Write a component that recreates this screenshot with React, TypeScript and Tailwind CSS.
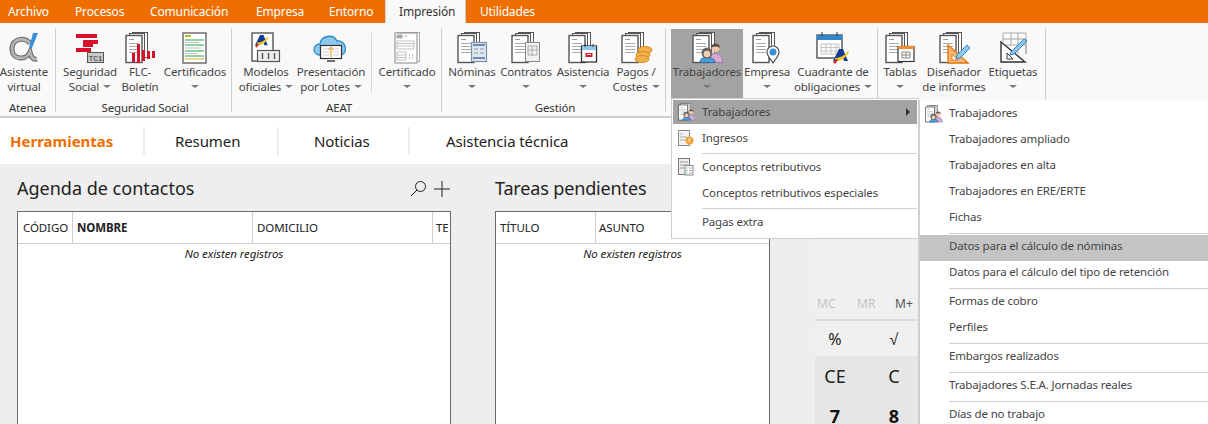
import type { ReactNode } from 'react';

// ─── Icons ────────────────────────────────────────────────────────────
function Stack({ lines = 4 }: { lines?: number }) {
  return (
    <g>
      <rect x="7.500" y="0.500" width="15" height="25" fill="#fff" stroke="#555" />
      <rect x="4.500" y="1.500" width="15" height="26" fill="#fff" stroke="#555" />
      <rect x="1" y="3.500" width="16" height="27" fill="#fff" stroke="#555" strokeWidth="1.400" />
      <path d="M4 7.500h5" stroke="#999" />
      {Array.from({ length: lines }).map((_, i) => (
        <path key={i} d={`M4 ${11.5 + i * 3}h10`} stroke="#aaa" />
      ))}
    </g>
  );
}

function Svg({ children, size = 34 }: { children: ReactNode; size?: number }) {
  return (
    <svg width={size} height={size} viewBox="-2 0 34 34" fill="none" className="shrink-0 overflow-visible">
      {children}
    </svg>
  );
}

function AlphaIcon() {
  return (
    <svg width="30" height="32" viewBox="0 0 30 32" fill="none">
      <path d="M21 12C18 5 3 5 3 17c0 11 14 12 18 3 1 5 3 8 7 7" stroke="#666" strokeWidth="5" />
      <path d="M21 12C18 5 3 5 3 17c0 11 14 12 18 3 1 5 3 8 7 7" stroke="#b4b4b4" strokeWidth="3" />
      <path d="M24 1h5l-6 15h-3z" fill="#3a8fd8" />
    </svg>
  );
}

function SegSocialIcon() {
  return (
    <svg width="30" height="32" viewBox="0 0 30 32" fill="none">
      <path d="M1 2h21v4H1zM8 8h15v4H8zM8 11h10v4H8zM1 16h15v4H1z" fill="#d8102c" />
      <rect x="12.500" y="20.500" width="16" height="10" fill="#c9c9c9" stroke="#555" />
      <text x="20.500" y="29" textAnchor="middle" fontSize="8" fill="#333" fontFamily="'Liberation Mono', monospace">TC1</text>
    </svg>
  );
}

function FlcIcon() {
  return (
    <Svg>
      <Stack />
      <path d="M7 21h3v9H7zM12 12h3v19h-3zM17 18h3v11h-3zM22 19h3v8h-3zM27 19h3v7h-3z" fill="#d8102c" />
    </Svg>
  );
}

function CertGreenIcon() {
  return (
    <svg width="26" height="32" viewBox="0 0 26 32" fill="none">
      <rect x="1" y="1" width="23" height="30" fill="#fff" stroke="#666" strokeWidth="1.400" />
      <path d="M3 3h6v2H3z" fill="#b8b820" />
      <path d="M3 8h19M3 13h19M3 19h19M3 24h19" stroke="#22a04a" />
      <path d="M3 10.500h14M3 16h16M3 21.500h12" stroke="#bbb" />
      <path d="M3 27h19" stroke="#d8b020" />
    </svg>
  );
}

function AeatMark({ x, y, s = 1 }: { x: number; y: number; s?: number }) {
  return (
    <g transform={`translate(${x} ${y}) scale(${s})`}>
      <path d="M6 0h4l5 12h-4l-1-3H5l-2 3H0z" fill="#123a96" />
      <path d="M2 9c5 0 9-2 13-7l1 1c-3 6-8 9-13 9z" fill="#f5c518" />
      <path d="M0 13l4-3 1 1-3 4z" fill="#e02020" />
    </g>
  );
}

function ModelosIcon() {
  return (
    <svg width="30" height="32" viewBox="0 0 30 32" fill="none">
      <rect x="1" y="1" width="21" height="28" fill="#fff" stroke="#555" strokeWidth="1.400" />
      <AeatMark x={4} y={3} s={0.85} />
      <rect x="6.500" y="18.500" width="22" height="11" fill="#eee" stroke="#555" strokeWidth="1.200" />
      <path d="M11.500 21v6M17.500 21v6M23.500 21v6" stroke="#555" strokeWidth="1.400" />
    </svg>
  );
}

function CloudIcon() {
  return (
    <svg width="36" height="32" viewBox="0 0 36 32" fill="none">
      <path d="M7 23c-8 0-8-11 0-11 1-8 13-11 17-3 9-2 12 14 3 14z" fill="#8cc8ee" stroke="#2f86c8" strokeWidth="1.300" />
      <rect x="7.500" y="13.500" width="21" height="13" fill="#fff" stroke="#333" strokeWidth="1.200" />
      <path d="M10 17h6M10 20h6M10 23h6M20 17h6M20 20h6M20 23h6" stroke="#ccc" />
      <path d="M18 25v-9M15.500 18l2.500-3 2.500 3" stroke="#ee8a10" />
      <path d="M14 29h8" stroke="#333" strokeWidth="1.400" />
    </svg>
  );
}

function CertGrayIcon() {
  return (
    <svg width="26" height="32" viewBox="0 0 26 32" fill="none">
      <rect x="3.500" y="0.500" width="22" height="29" fill="#fff" stroke="#aaa" />
      <rect x="1" y="1" width="22" height="30" fill="#fff" stroke="#999" strokeWidth="1.200" />
      <path d="M3 3h5v3H3zM10 4h3" fill="#aaa" stroke="#aaa" />
      <path d="M3 9h17v8H3zM3 11.500h17M3 14h17M3 20h9v8H3zM3 23h9M3 25.500h9" stroke="#c0c0c0" />
      <path d="M15 23h1M18 23h1M15 26h1M18 26h1" stroke="#888" />
    </svg>
  );
}

function NominasIcon() {
  return (
    <Svg>
      <Stack />
      <rect x="14.500" y="10.500" width="15" height="19" fill="#dfe6ee" stroke="#7d93ad" strokeWidth="1.200" />
      <path d="M16 13h12M16 26h12" stroke="#6f8cb0" strokeWidth="2" />
      <path d="M17 17h4M23 17h4M17 21h4M23 21h4" stroke="#99a" />
    </Svg>
  );
}

function ContratosIcon() {
  return (
    <Svg>
      <Stack />
      <rect x="14.500" y="10.500" width="14" height="19" fill="#f1f1f1" stroke="#888" />
      <path d="M17 14h9v9h-9zM17 18h9M21 14v9" stroke="#aaa" />
    </Svg>
  );
}

function AsistenciaIcon() {
  return (
    <Svg>
      <Stack />
      <rect x="13.500" y="14" width="15" height="16" fill="#fff" stroke="#333" strokeWidth="1.300" />
      <path d="M14 14h14v4H14z" fill="#8cc8ee" />
      <path d="M17 12v3M25 12v3" stroke="#333" />
      <path d="M17.500 21h7v4h-7z" fill="#e0102c" />
      <path d="M19 22.500h4" stroke="#fff" />
    </Svg>
  );
}

function PagosIcon() {
  return (
    <Svg>
      <Stack />
      <ellipse cx="24" cy="18" rx="7" ry="3.500" fill="#f2b04a" stroke="#d98a1e" />
      <ellipse cx="22" cy="23" rx="7" ry="3.500" fill="#f2b04a" stroke="#d98a1e" />
      <ellipse cx="21" cy="27" rx="7" ry="3.500" fill="#f2b04a" stroke="#d98a1e" />
    </Svg>
  );
}

function TrabajadoresIcon({ size = 34 }: { size?: number }) {
  return (
    <Svg size={size}>
      <Stack />
      <path d="M17 30.500c0-6 3-9 6.500-9s7.500 3 7.500 9z" fill="#d8a8d8" stroke="#a07ca0" />
      <circle cx="23.500" cy="16" r="4" fill="#f2c6a8" />
      <path d="M19 16c0-6 9-6 9 0-2-2-7-2-9 0z" fill="#5a4a44" />
      <path d="M8 30.500c0-4 3-5 7-5s8 1 8 5z" fill="#4f9fdc" stroke="#2f6f9f" />
      <circle cx="15" cy="21" r="5.500" fill="#666" />
      <circle cx="15" cy="22" r="3.300" fill="#f2cdb4" />
    </Svg>
  );
}

function EmpresaIcon() {
  return (
    <Svg>
      <Stack />
      <path d="M21 31c-3-5-6-7-6-11a6 6 0 0 1 12 0c0 4-3 6-6 11z" fill="#fff" stroke="#555" strokeWidth="1.200" />
      <circle cx="21" cy="20" r="3.500" fill="#3a8fd8" />
    </Svg>
  );
}

function CuadranteIcon() {
  return (
    <svg width="34" height="32" viewBox="0 0 34 32" fill="none">
      <rect x="1" y="3" width="25" height="23" fill="#fff" stroke="#333" strokeWidth="1.200" />
      <path d="M1 3h25v5H1z" fill="#2f86c8" />
      <path d="M6 0v4M21 0v4" stroke="#333" />
      <path d="M5 12h18v10H5zM5 15.500h18M5 19h18M10 12v10M15 12v10M20 12v10" stroke="#c4c4c4" />
      <AeatMark x={17} y={17} />
    </svg>
  );
}

function TablasIcon() {
  return (
    <Svg>
      <Stack />
      <rect x="13" y="14.500" width="16" height="15" fill="#fff" stroke="#333" strokeWidth="1.200" />
      <path d="M13 14h16v3H13z" fill="#f2902a" />
      <path d="M17 20h8v6h-8zM21 20v6M17 23h8" stroke="#888" />
    </Svg>
  );
}

function DisenadorIcon() {
  return (
    <Svg>
      <Stack />
      <path d="M9 13l20 18H9z" fill="#f7b878" stroke="#e57a10" strokeWidth="1.400" />
      <path d="M13 22l6 6h-6z" fill="#fff" stroke="#e57a10" />
      <path d="M18 23l10-10 3 3-10 10-4 1z" fill="#8cc8ee" stroke="#2f86c8" />
    </Svg>
  );
}

function EtiquetasIcon() {
  return (
    <svg width="30" height="32" viewBox="0 0 30 32" fill="none">
      <path d="M5 1h23v21M5 1v9M5 7h23M5 13h23M13 1v12M20 1v21M28 7v15" stroke="#aaa" />
      <path d="M3 10l24 20H3z" fill="#fff" stroke="#333" strokeWidth="1.400" />
      <path d="M9 21l6 6H9z" stroke="#333" />
      <path d="M13 20l13-13 3 2-13 13-4 1z" fill="#8cc8ee" stroke="#2f86c8" />
    </svg>
  );
}

function IngresosIcon() {
  return (
    <svg width="18" height="18" viewBox="0 0 18 18" fill="none">
      <rect x="1.500" y="1.500" width="11" height="15" fill="#f3f3f3" stroke="#888" />
      <path d="M3 5h3M3 8h7M3 11h6" stroke="#aaa" />
      <circle cx="12.500" cy="11.500" r="4" fill="#f2a53a" />
      <path d="M14 10c-2-1-3 2-1 3" stroke="#fff" />
    </svg>
  );
}

function ConceptosIcon() {
  return (
    <svg width="18" height="18" viewBox="0 0 18 18" fill="none">
      <rect x="1.500" y="0.500" width="11" height="16" fill="#eee" stroke="#777" />
      <path d="M3 4h8M3 7h8M3 10h4" stroke="#999" />
      <rect x="8" y="7.500" width="8" height="9.500" fill="#fff" stroke="#888" />
      <path d="M9.500 10h1M9.500 12.500h1M9.500 15h1" stroke="#3a9a50" />
      <path d="M12 10h3M12 12.500h3M12 15h3" stroke="#aaa" />
    </svg>
  );
}

function Caret() {
  return <span className="inline-block w-0 h-0 border-x-[4px] border-x-transparent border-t-[3px] border-t-[#777] align-middle" />;
}

// ─── Ribbon ───────────────────────────────────────────────────────────
function RibbonButton({ icon, top, bottom, caret, width, active }: {
  icon: ReactNode;
  top: string;
  bottom?: string;
  caret?: boolean;
  width: string;
  active?: boolean;
}) {
  return (
    <div className={`${width} h-[69px] flex flex-col items-center shrink-0 ${active ? 'bg-[#a3a3a3]' : ''}`}>
      <div className="h-[35px] shrink-0 flex items-start justify-center pt-[3px]">{icon}</div>
      <div className="h-[15px] leading-[15px] whitespace-nowrap">{top}</div>
      <div className="h-[15px] leading-[15px] whitespace-nowrap flex items-center gap-[4px]">
        {bottom && <span>{bottom}</span>}
        {caret && <Caret />}
      </div>
    </div>
  );
}

function RibbonGroup({ label, width, children }: { label: string; width: string; children: ReactNode }) {
  return (
    <div className={`${width} h-[84px] mt-[5px] shrink-0 flex flex-col border-r border-[#cfcfcf]`}>
      <div className="flex h-[69px] mt-[1px] shrink-0">{children}</div>
      <div className="h-[16px] shrink-0 mt-[2px] leading-[16px] text-center text-[#333] whitespace-nowrap">{label}</div>
    </div>
  );
}

function Ribbon() {
  return (
    <div className="h-[95px] bg-[#f9f9f9] border-b-2 border-[#cfcfcf] flex text-[11.5px] text-[#444] tracking-[-0.15px] shrink-0">
      <RibbonGroup label="Atenea" width="w-[56px]">
        <RibbonButton width="w-[48px]" icon={<AlphaIcon />} top="Asistente" bottom="virtual" />
      </RibbonGroup>
      <RibbonGroup label="Seguridad Social" width="w-[176px] pl-[3px]">
        <RibbonButton width="w-[62px]" icon={<SegSocialIcon />} top="Seguridad" bottom="Social" caret />
        <RibbonButton width="w-[38px]" icon={<FlcIcon />} top="FLC-" bottom="Boletín" />
        <RibbonButton width="w-[72px]" icon={<CertGreenIcon />} top="Certificados" caret />
      </RibbonGroup>
      <RibbonGroup label="AEAT" width="w-[210px] pl-[5px]">
        <RibbonButton width="w-[58px]" icon={<ModelosIcon />} top="Modelos" bottom="oficiales" caret />
        <RibbonButton width="w-[72px]" icon={<CloudIcon />} top="Presentación" bottom="por Lotes" caret />
        <div className="w-px h-[60px] mt-[4px] ml-[4px] mr-[2px] bg-[#d6d6d6] shrink-0" />
        <RibbonButton width="w-[66px]" icon={<CertGrayIcon />} top="Certificado" caret />
      </RibbonGroup>
      <RibbonGroup label="Gestión" width="w-[224px] pl-[3px]">
        <RibbonButton width="w-[54px]" icon={<NominasIcon />} top="Nóminas" caret />
        <RibbonButton width="w-[54px]" icon={<ContratosIcon />} top="Contratos" caret />
        <RibbonButton width="w-[60px]" icon={<AsistenciaIcon />} top="Asistencia" caret />
        <RibbonButton width="w-[46px]" icon={<PagosIcon />} top="Pagos /" bottom="Costes" caret />
      </RibbonGroup>
      <RibbonGroup label="" width="w-[212px] pl-[5px]">
        <RibbonButton width="w-[72px]" icon={<TrabajadoresIcon />} top="Trabajadores" caret active />
        <RibbonButton width="w-[48px]" icon={<EmpresaIcon />} top="Empresa" caret />
        <RibbonButton width="w-[84px]" icon={<CuadranteIcon />} top="Cuadrante de" bottom="obligaciones" caret />
      </RibbonGroup>
      <RibbonGroup label="" width="w-[168px]">
        <RibbonButton width="w-[44px]" icon={<TablasIcon />} top="Tablas" caret />
        <RibbonButton width="w-[64px]" icon={<DisenadorIcon />} top="Diseñador" bottom="de informes" />
        <RibbonButton width="w-[54px]" icon={<EtiquetasIcon />} top="Etiquetas" caret />
      </RibbonGroup>
    </div>
  );
}

const tabs = [
  { name: 'Archivo', w: 'w-[61px] pl-[8px]' },
  { name: 'Procesos', w: 'w-[75px] pl-[14px]' },
  { name: 'Comunicación', w: 'w-[106px] pl-[14px]' },
  { name: 'Empresa', w: 'w-[73px] pl-[14px]' },
  { name: 'Entorno', w: 'w-[70px] pl-[14px]' },
  { name: 'Impresión', w: 'w-[81px] pl-[13px]', active: true },
  { name: 'Utilidades', w: 'w-[90px] pl-[14px]' },
];

// ─── Table panels ─────────────────────────────────────────────────────
function DataTable({ width, cols }: { width: string; cols: { name: string; w: string; bold?: boolean; last?: boolean }[] }) {
  return (
    <div className={`${width} h-[240px] mt-[11px] bg-white border border-[#6a6a6a] border-b-0 text-[11.5px] tracking-[-0.1px] text-[#222]`}>
      <div className="flex h-[32px] border-b border-[#cfcfcf]">
        {cols.map((c) => (
          <div key={c.name} className={`${c.w} shrink-0 flex items-center whitespace-nowrap ${c.last ? 'pl-[3px]' : 'pl-[4px] border-r border-[#cfcfcf]'} ${c.bold ? 'font-bold' : ''}`}>
            {c.name}
          </div>
        ))}
      </div>
      <div className="text-center italic leading-[20px] h-[20px]">No existen registros</div>
    </div>
  );
}

// ─── Menus ────────────────────────────────────────────────────────────
function MenuSep({ left }: { left: string }) {
  return <div className={`${left} h-[3px] flex items-start`}><div className="h-px w-full mt-px bg-[#d0d0d0]" /></div>;
}

function MenuRow({ label, icon, active, arrow, indent, activeBg, height }: {
  label: string;
  icon?: ReactNode;
  active?: boolean;
  arrow?: boolean;
  indent: string;
  activeBg?: string;
  height: string;
}) {
  return (
    <div className={`${height} flex items-center relative ${active ? activeBg : ''}`}>
      {icon && <span className="absolute left-[4px] top-[3px]">{icon}</span>}
      <span className={`${indent} whitespace-nowrap`}>{label}</span>
      {arrow && <span className="absolute right-[7px] top-[8px] w-0 h-0 border-y-[4px] border-y-transparent border-l-[4px] border-l-[#333]" />}
    </div>
  );
}

const subItems: (string | null)[] = [
  'Trabajadores',
  'Trabajadores ampliado',
  'Trabajadores en alta',
  'Trabajadores en ERE/ERTE',
  'Fichas',
  null,
  'Datos para el cálculo de nóminas',
  'Datos para el cálculo del tipo de retención',
  null,
  'Formas de cobro',
  'Perfiles',
  null,
  'Embargos realizados',
  null,
  'Trabajadores S.E.A. Jornadas reales',
  null,
  'Días de no trabajo',
];

export default function App() {
  return (
    <div className="relative w-[1208px] h-[424px] overflow-hidden flex flex-col bg-white font-['Noto_Sans','Liberation_Sans',sans-serif]">
      {/* Tab strip */}
      <div className="h-[23px] bg-[#ee6f00] flex text-[12px] tracking-[-0.15px] text-white shrink-0">
        {tabs.map((t) => (
          <div key={t.name} className={`${t.w} leading-[23px] ${t.active ? 'bg-[#f9f9f9] text-[#333] border-x border-[#cfcfcf]' : ''}`}>
            {t.name}
          </div>
        ))}
      </div>

      <Ribbon />

      {/* Herramientas nav */}
      <div className="h-[46px] bg-white flex items-center text-[#222] text-[15px] tracking-[-0.1px] shrink-0">
        <div className="w-[145px] h-[28px] pl-[10px] leading-[28px] font-bold tracking-normal text-[#ee6f00] border-r-2 border-[#ececec]">Herramientas</div>
        <div className="w-[134px] h-[28px] pl-[30px] leading-[28px] border-r-2 border-[#ececec]">Resumen</div>
        <div className="w-[131px] h-[28px] pl-[35px] leading-[28px] border-r-2 border-[#ececec]">Noticias</div>
        <div className="pl-[36px] leading-[28px]">Asistencia técnica</div>
      </div>

      {/* Panels */}
      <div className="flex-1 flex bg-[#eeeeee] overflow-hidden">
        <div className="w-[495px] pl-[17px] pt-[13px] shrink-0">
          <div className="w-[434px] h-[23px] flex items-center justify-between">
            <span className="text-[18px] text-[#222] leading-[23px]">Agenda de contactos</span>
            <span className="flex items-center gap-[7px] pr-[1px]">
              <svg width="17" height="17" viewBox="0 0 17 17" fill="none" stroke="#222">
                <circle cx="10.500" cy="6.500" r="5" />
                <path d="M7 10l-6 6" />
              </svg>
              <svg width="16" height="16" viewBox="0 0 16 16" fill="none" stroke="#222">
                <path d="M8 0v16M0 8h16" />
              </svg>
            </span>
          </div>
          <DataTable
            width="w-[434px]"
            cols={[
              { name: 'CÓDIGO', w: 'w-[55px] !pl-[5px]' },
              { name: 'NOMBRE', w: 'w-[180px]', bold: true },
              { name: 'DOMICILIO', w: 'w-[180px]' },
              { name: 'TE', w: 'w-[17px]', last: true },
            ]}
          />
        </div>
        <div className="w-[315px] pt-[13px] shrink-0">
          <div className="h-[23px] text-[18px] tracking-[-0.15px] text-[#222] leading-[23px]">Tareas pendientes</div>
          <DataTable
            width="w-[275px]"
            cols={[
              { name: 'TÍTULO', w: 'w-[100px]' },
              { name: 'ASUNTO', w: 'w-[173px]', last: true },
            ]}
          />
        </div>

        {/* Calculator */}
        <div className="flex-1 ml-[5px] bg-[#f0f0f0] flex flex-col">
          <div className="h-[157px] shrink-0 border-b-2 border-[#dcdcdc] flex items-end pb-[6px] pl-[2px] text-[12px]">
            <span className="w-[40px] text-[#c4c4c4]">MC</span>
            <span className="w-[38px] text-[#c4c4c4]">MR</span>
            <span className="text-[#555]">M+</span>
          </div>
          <div className="h-[35px] shrink-0 flex items-center text-[16px] text-[#222]">
            <span className="w-[40px] text-center">%</span>
            <span className="w-[78px] text-center">√</span>
          </div>
          <div className="h-[40px] shrink-0 bg-[#e6e6e6] flex items-center text-[18px] text-[#222]">
            <span className="w-[40px] text-center">CE</span>
            <span className="w-[78px] text-center">C</span>
          </div>
          <div className="h-[40px] shrink-0 bg-[#e6e6e6] flex items-center text-[18px] font-bold text-[#111]">
            <span className="w-[40px] text-center">7</span>
            <span className="w-[78px] text-center">8</span>
          </div>
        </div>
      </div>

      {/* Trabajadores menu */}
      <div className="absolute left-[671px] top-[98px] w-[248px] h-[141px] bg-white border border-[#cfcfcf] p-px text-[11.5px] text-[#444] tracking-[-0.15px]">
        <MenuRow height="h-[24px] mb-[2px]" label="Trabajadores" indent="pl-[29px]" active activeBg="bg-[#a3a3a3]" arrow icon={<TrabajadoresIcon size={19} />} />
        <MenuRow height="h-[24px] mb-[2px]" label="Ingresos" indent="pl-[29px]" icon={<IngresosIcon />} />
        <MenuSep left="pl-[29px]" />
        <MenuRow height="h-[24px] mb-[2px]" label="Conceptos retributivos" indent="pl-[29px]" icon={<ConceptosIcon />} />
        <MenuRow height="h-[24px] mb-[2px]" label="Conceptos retributivos especiales" indent="pl-[29px]" />
        <MenuSep left="pl-[29px]" />
        <MenuRow height="h-[24px]" label="Pagas extra" indent="pl-[29px]" />
      </div>

      {/* Submenu */}
      <div className="absolute left-[918px] top-[100px] w-[290px] h-[324px] bg-white border-l-2 border-[#cfcfcf] pt-[2px] text-[11.5px] text-[#444] tracking-[-0.15px]">
        {subItems.map((item, i) =>
          item === null ? (
            <MenuSep key={i} left="pl-[29px]" />
          ) : (
            <MenuRow
              key={i}
              height="h-[26px] pb-[4px]"
              label={item}
              indent="pl-[29px]"
              active={i === 6}
              activeBg="bg-[#c4c4c4]"
              icon={i === 0 ? <TrabajadoresIcon size={19} /> : undefined}
            />
          ),
        )}
      </div>
    </div>
  );
}
